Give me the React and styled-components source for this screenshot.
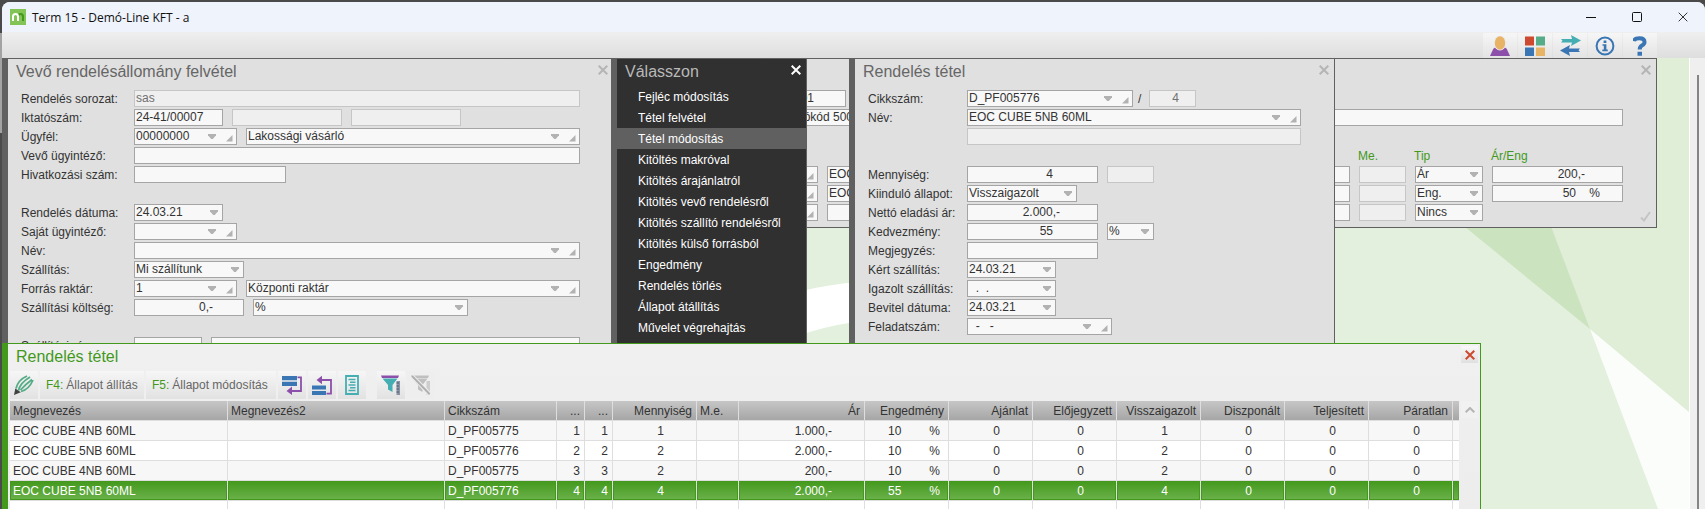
import React, { useId } from 'react';
import styled, { createGlobalStyle, css } from 'styled-components';

const GlobalStyle = createGlobalStyle`
  * {
    box-sizing: border-box;
  }

  body {
    margin: 0;
    background: #4a4a4a;
    font-family: 'Liberation Sans', Arial, sans-serif;
    font-size: 12px;
    color: #333;
    overflow: hidden;
  }

  button, input, select {
    font: inherit;
    color: inherit;
    margin: 0;
    padding: 0;
    border: 0;
    border-radius: 0;
    background: none;
    outline: none;
  }
`;

/* ---------- application frame ---------- */

const Screen = styled.div`
  height: 100vh;
  padding: 2px 0 0 2px;
  background: linear-gradient(#4a4a4a 33px, #a3a3a3 33px, #a3a3a3 133px, #4a4a4a 133px);
`;

const AppWindow = styled.div`
  height: 100%;
  display: flex;
  flex-direction: column;
  border-radius: 8px 8px 0 0;
  overflow: hidden;
  background: #efefef;
`;

const TitleBar = styled.header`
  height: 30px;
  flex: none;
  display: flex;
  align-items: center;
  gap: 6px;
  padding-left: 8px;
  background: #eff3fb;
`;

const AppTitle = styled.h1`
  flex: 1;
  margin: 0;
  font: 400 12px 'Open Sans', 'Noto Sans', sans-serif;
  color: #111;
`;

const CaptionButtons = styled.div`
  display: flex;
`;

const CaptionButton = styled.button`
  width: 46px;
  height: 30px;
  display: flex;
  align-items: center;
  justify-content: center;
  padding-left: 2px;
`;

const MainToolbar = styled.nav`
  height: 26px;
  flex: none;
  display: flex;
  justify-content: flex-end;
  gap: 1px;
  padding: 1px 48px 0 0;
  background: linear-gradient(#efefef, #dedede);
`;

const MainButton = styled.button`
  width: 34px;
  height: 25px;
  display: flex;
  align-items: center;
  justify-content: center;
  background: linear-gradient(#f6f6f6, #e3e3e3);
`;

const Workspace = styled.main`
  flex: 1;
  min-height: 0;
  display: flex;
`;

const Desktop = styled.div`
  position: relative;
  flex: 1;
  overflow: hidden;
  background: #e4f0de;
`;

const Backdrop = styled.svg`
  position: absolute;
  top: 0;
  right: 0;
`;

const ScrollTrack = styled.div`
  width: 16px;
  padding: 17px 6px 0 7px;
  border-left: 1px solid #fff;
  background: #efefef;
`;

const ScrollThumb = styled.div`
  width: 2px;
  height: 100%;
  background: #858585;
`;

/* ---------- windows on the desktop ---------- */

const tones = {
  form: css`
    background: #e0e0e0;
    border-color: #606060;
    --title: #666;
  `,
  menu: css`
    background: #303030;
    border-color: #606060;
    --title: #b9b9b9;
  `,
  active: css`
    background: linear-gradient(#f0f0f0, #e8e8e8);
    border-color: #43991c;
    --title: #43991c;
  `,
};

const Panel = styled.section`
  position: absolute;
  left: ${(p) => p.$x}px;
  top: ${(p) => p.$y}px;
  width: ${(p) => p.$w}px;
  height: ${(p) => p.$h}px;
  overflow: hidden;
  border-style: solid;
  border-width: 1px 1px ${(p) => (p.$closed ? 1 : 0)}px 6px;
  ${(p) => tones[p.$tone]}
`;

const PanelHeader = styled.header`
  height: 27px;
  display: flex;
  justify-content: space-between;
  padding: 2px 2px 0 8px;
`;

const PanelTitle = styled.h2`
  margin: 0;
  font-size: 16px;
  font-weight: 400;
  line-height: 22px;
  color: var(--title);
`;

const CloseButton = styled.button`
  width: 17px;
  height: 17px;
  display: flex;
  align-items: center;
  justify-content: center;
  color: ${(p) => p.$color};
  background: ${(p) => (p.$raised ? 'linear-gradient(#f8f8f8, #e0e0e0)' : 'none')};
`;

const FormBody = styled.form`
  display: flex;
  flex-direction: column;
  gap: 2px;
  padding: 4px 0 0 13px;
`;

const FormRow = styled.div`
  height: 17px;
  flex: none;
  display: flex;
  align-items: center;
`;

const Fields = styled.div`
  display: flex;
  align-items: center;
  gap: 9px;
`;

const Label = styled.label`
  width: ${(p) => p.$w}px;
  flex: none;
  white-space: nowrap;
`;

const Slash = styled.span`
  width: 16px;
  margin: 0 -9px;
  padding-left: 5px;
`;

const Box = styled.div`
  display: grid;
  width: ${(p) => p.$w}px;
  height: 17px;
  flex: none;
  border: 1px solid ${(p) => (p.$off ? '#c6c6c6' : '#a5a5a5')};
  background: ${(p) => (p.$off ? '#efefef' : '#f8f8f8')};
  color: ${(p) => (p.$off ? '#707070' : '#333')};
`;

const control = css`
  grid-area: 1 / 1;
  width: 100%;
  min-width: 0;
  height: 15px;
  line-height: 15px;
`;

const TextInput = styled.input`
  ${control}
  padding-left: 1px;
  padding-right: ${(p) => p.$pad || 0}px;
  text-align: ${(p) => (p.$pad ? 'right' : 'left')};
`;

const Select = styled.select`
  ${control}
  appearance: none;
  padding-left: 1px;
`;

const Marks = styled.span`
  grid-area: 1 / 1;
  justify-self: end;
  display: flex;
  align-items: center;
  gap: 10px;
  padding-right: ${(p) => (p.$lookup ? 3 : 4)}px;
  pointer-events: none;
`;

const Head = styled.span`
  width: ${(p) => p.$w}px;
  color: #43991c;
`;

const Confirm = styled.button`
  position: absolute;
  right: 5px;
  bottom: 5px;
  display: flex;
`;

/* ---------- menu ---------- */

const MenuList = styled.ul`
  margin: 0;
  padding: 0;
  list-style: none;
`;

const MenuItem = styled.button`
  width: 100%;
  height: 21px;
  display: block;
  padding-left: 21px;
  text-align: left;
  color: #fff;
  background: ${(p) => (p.$selected ? '#606060' : 'none')};
`;

/* ---------- item list ---------- */

const ListToolbar = styled.div`
  display: flex;
  gap: 2px;
  padding: 0 0 2px 2px;
`;

const ToolButton = styled.button`
  width: 28px;
  height: 28px;
  display: flex;
  align-items: center;
  justify-content: center;
  margin-left: ${(p) => (p.$apart ? 9 : 0)}px;
  background: ${(p) => (p.disabled ? '#eee' : 'linear-gradient(#f6f6f6, #e2e2e2)')};
`;

const TextToolButton = styled(ToolButton)`
  width: ${(p) => p.$w}px;
  justify-content: flex-start;
  gap: 3px;
  padding-left: 6px;
  color: #666;
  white-space: nowrap;

  b {
    font-weight: 400;
    color: #43991c;
  }
`;

const ListArea = styled.div`
  display: flex;
  gap: 2px;
  padding: 0 2px;
`;

const ItemTable = styled.table`
  flex: 1;
  table-layout: fixed;
  border-collapse: separate;
  border-spacing: 0;
  line-height: 16px;
`;

const cell = css`
  height: 20px;
  padding: 0 ${(p) => p.$pad || 4}px 0 3px;
  border-right: 1px solid #dedede;
  border-bottom: 1px solid #dedede;
  font-weight: 400;
  text-align: ${(p) => (p.$right ? 'right' : 'left')};
  white-space: nowrap;
  overflow: hidden;

  &:last-child {
    padding: 0;
    border-right: 0;
  }
`;

const Th = styled.th`
  ${cell}
  background: linear-gradient(#c6c6c6, #a6a6a6);
`;

const Td = styled.td`
  ${cell}
`;

const Tr = styled.tr`
  background: #fff;

  &:nth-child(odd) {
    background: #f7f7f7;
  }

  &:last-child {
    background: #fff;
  }

  &[aria-selected='true'] {
    color: #fff;
  }

  &[aria-selected='true'] td {
    background: linear-gradient(#43991c, #6bb14b);
    box-shadow: inset 0 0 0 1px #43991c;
  }
`;

const Pair = styled.span`
  display: flex;
  justify-content: flex-end;
  gap: 28px;
`;

const ScrollUp = styled.button`
  width: 17px;
  height: 17px;
  display: flex;
  align-items: center;
  justify-content: center;
  background: #f1f1f1;
`;

/* ---------- small drawings ---------- */

const Cross = ({ width = 2 }) => (
  <svg width="10" height="10" viewBox="0 0 10 10" stroke="currentColor" strokeWidth={width} fill="none">
    <path d="M0.7 0.7L9.3 9.3M9.3 0.7L0.7 9.3" />
  </svg>
);

const DownMark = () => (
  <svg width="8" height="5" viewBox="0 0 8 5" fill="#b2b2b2">
    <path d="M0 0H8V1.3L4.8 5H3.2L0 1.3Z" />
  </svg>
);

const CornerMark = () => (
  <svg width="7" height="11" viewBox="0 0 7 11" fill="#b2b2b2">
    <path d="M6.5 4V10.5H0Z" />
  </svg>
);

const AppLogo = () => (
  <svg width="16" height="16" viewBox="0 0 16 16" fill="none" strokeWidth="2">
    <rect width="16" height="16" fill="#82c455" />
    <path d="M8 12V7.5Q8 5 10.6 5Q13 5 13 7.5V12" stroke="#43991c" />
    <path d="M3 12V7.5Q3 5 5.6 5Q8 5 8 7.5V12" stroke="#fff" />
  </svg>
);

const UserIcon = () => (
  <svg width="20" height="20" viewBox="0 0 20 20">
    <path d="M0 20L3.2 13Q4 11.5 5.5 11.5H14.5Q16 11.5 16.8 13L20 20Z" fill="#8c50ab" />
    <ellipse cx="10" cy="7" rx="6.2" ry="7.6" fill="#ebebeb" />
    <ellipse cx="10" cy="7" rx="5.2" ry="6.7" fill="#e9b365" />
  </svg>
);

const TilesIcon = () => (
  <svg width="20" height="20" viewBox="0 0 20 20">
    <path d="M0 0.5H9V9.5H0Z" fill="#cd4a30" />
    <path d="M11 0.5H20V9.5H11Z" fill="#56ac88" />
    <path d="M0 11.5H9V20H0Z" fill="#3a76b4" />
    <path d="M11 11.5H20V20H11Z" fill="#e9b365" />
  </svg>
);

const SwapIcon = () => (
  <svg width="21" height="21" viewBox="0 0 21 21">
    <path d="M1 4H12L11 0L21 5.5L11 11L12 7.5H1L2.5 5.8Z" fill="#45aeb2" />
    <path d="M20 13.5H9L10 10L0 15.5L10 21L9 17H20L18.5 15.2Z" fill="#3a76b4" />
  </svg>
);

const InfoIcon = () => (
  <svg width="20" height="20" viewBox="0 0 20 20">
    <circle cx="10" cy="10" r="8.4" fill="none" stroke="#3a76b4" strokeWidth="2" />
    <path d="M8.6 4.5H11.4V7H8.6ZM7.5 8.2H11.4V13.6H12.8V15.2H7.3V13.6H8.8V9.8H7.5Z" fill="#3a76b4" />
  </svg>
);

const HelpIcon = () => (
  <svg width="14" height="20" viewBox="0 0 14 20" fill="none" stroke="#3a76b4">
    <path d="M1 5.2Q1.5 2.2 6.5 2.2Q11.5 2.2 11.5 6Q11.5 8 9.3 9.3Q6.7 10.6 6.7 13.5" strokeWidth="4" />
    <path d="M4.5 17.7H9" strokeWidth="4" />
  </svg>
);

const PencilIcon = () => (
  <svg width="20" height="20" viewBox="0 0 20 20" fill="none">
    <path d="M2 13.5Q4 5 13 1M4.5 15.5Q6 8 16 2M7 16.5Q15 14.5 19 5M6.5 15Q12 9 18 4.5" stroke="#56ac88" strokeWidth="1.8" />
    <path d="M0 20L1.3 13.5L6.8 17.2Z" fill="#404040" />
  </svg>
);

const InsertBelowIcon = () => (
  <svg width="20" height="20" viewBox="0 0 20 20">
    <path d="M0 1H15V5.3H0ZM0 6.7H15V11H0Z" fill="#3a76b4" />
    <path d="M15.5 2.4H19V16H7" fill="none" stroke="#8c50ab" strokeWidth="1.8" />
    <path d="M10 11.5V20L4.5 16Z" fill="#8c50ab" />
  </svg>
);

const InsertAboveIcon = () => (
  <svg width="20" height="20" viewBox="0 0 20 20">
    <path d="M0 10.5H14V14.6H0ZM0 16H14V20H0Z" fill="#3a76b4" />
    <path d="M14.5 18.6H19V5H8" fill="none" stroke="#8c50ab" strokeWidth="1.8" />
    <path d="M10 0.8V9.2L4.5 5Z" fill="#8c50ab" />
  </svg>
);

const PageIcon = () => (
  <svg width="14" height="20" viewBox="0 0 14 20" fill="none" stroke="#45aeb2">
    <path d="M1 1H13V19H1Z" strokeWidth="1.8" />
    <path d="M3.5 4.5H10.5M3.5 10H10.5M3.5 15.5H10.5" strokeWidth="1.5" />
    <path d="M5 7.3H10.5M5 12.8H10.5" strokeWidth="1.5" />
  </svg>
);

const FilterIcon = () => (
  <svg width="20" height="20" viewBox="0 0 20 20">
    <path d="M0 0.5H18L17 3H1Z" fill="#8c50ab" />
    <path d="M1.5 3.5H16.5L11.5 10V17L7 14.5V10Z" fill="#45aeb2" />
    <path d="M15.5 6H19V20H15.5Z" fill="#8a93a3" />
    <path d="M15.5 8H18M15.5 11H18M15.5 14H18M15.5 17H18" stroke="#4c5a70" />
  </svg>
);

const FilterOffIcon = () => (
  <svg width="20" height="20" viewBox="0 0 20 20">
    <path d="M0 0.5H18L17 3H1ZM1.5 3.5H16.5L11.5 10V17L7 14.5V10Z" fill="#bfbfbf" />
    <path d="M15.5 6H19V20H15.5Z" fill="#cdcdcd" />
    <path d="M1 1L18.5 19" stroke="#eee" strokeWidth="4" />
    <path d="M1 1L18.5 19" stroke="#b0b0b0" strokeWidth="2" />
  </svg>
);

/* ---------- building blocks ---------- */

const Field = ({ id, name, w, value = '', off, pad, drop, lookup, select }) => (
  <Box $w={w} $off={off}>
    {select ? (
      <Select id={id} aria-label={id ? undefined : name} defaultValue={value}>
        <option>{value}</option>
      </Select>
    ) : (
      <TextInput
        id={id}
        aria-label={id ? undefined : name}
        defaultValue={value}
        disabled={off}
        $pad={pad}
      />
    )}
    {(drop || lookup || select) && (
      <Marks $lookup={lookup}>
        <DownMark />
        {lookup && <CornerMark />}
      </Marks>
    )}
  </Box>
);

const Row = ({ label, labelWidth, fields = [] }) => {
  const id = useId();
  return (
    <FormRow>
      <Label $w={labelWidth} htmlFor={label ? id : undefined}>{label}</Label>
      <Fields>
        {fields.map((f, i) =>
          f === '/' ? (
            <Slash key={i}>/</Slash>
          ) : (
            <Field
              key={i}
              id={label && i === 0 ? id : undefined}
              name={`${label || 'Név'} ${i + 1}`}
              {...f}
            />
          )
        )}
      </Fields>
    </FormRow>
  );
};

const WindowHeader = ({ title, closeColor = '#b5b5b5', raised }) => (
  <PanelHeader>
    <PanelTitle>{title}</PanelTitle>
    <CloseButton type="button" aria-label="Bezárás" $color={closeColor} $raised={raised}>
      <Cross />
    </CloseButton>
  </PanelHeader>
);

/* ---------- data ---------- */

const orderRows = [
  { label: 'Rendelés sorozat:', fields: [{ w: 446, value: 'sas', off: true }] },
  { label: 'Iktatószám:', fields: [{ w: 89, value: '24-41/00007' }, { w: 110, off: true }, { w: 110, off: true }] },
  { label: 'Ügyfél:', fields: [{ w: 103, value: '00000000', lookup: true }, { w: 334, value: 'Lakossági vásárló', lookup: true }] },
  { label: 'Vevő ügyintéző:', fields: [{ w: 446 }] },
  { label: 'Hivatkozási szám:', fields: [{ w: 152 }] },
  {},
  { label: 'Rendelés dátuma:', fields: [{ w: 89, value: '24.03.21', drop: true }] },
  { label: 'Saját ügyintéző:', fields: [{ w: 103, lookup: true }] },
  { label: 'Név:', fields: [{ w: 446, lookup: true }] },
  { label: 'Szállítás:', fields: [{ w: 110, value: 'Mi szállítunk', select: true }] },
  { label: 'Forrás raktár:', fields: [{ w: 103, value: '1', lookup: true }, { w: 334, value: 'Központi raktár', lookup: true }] },
  { label: 'Szállítási költség:', fields: [{ w: 110, value: '0,-', pad: 30 }, { w: 215, value: '%', select: true }] },
  {},
  { label: 'Szállítási cím:', fields: [{ w: 68 }, { w: 369 }] },
];

const itemRows = [
  { label: 'Cikkszám:', fields: [{ w: 166, value: 'D_PF005776', lookup: true }, '/', { w: 47, value: '4', off: true, pad: 16 }] },
  { label: 'Név:', fields: [{ w: 334, value: 'EOC CUBE 5NB 60ML', lookup: true }] },
  { fields: [{ w: 334, off: true }] },
  {},
  { label: 'Mennyiség:', fields: [{ w: 131, value: '4', pad: 44 }, { w: 47, off: true }] },
  { label: 'Kiinduló állapot:', fields: [{ w: 110, value: 'Visszaigazolt', select: true }] },
  { label: 'Nettó eladási ár:', fields: [{ w: 131, value: '2.000,-', pad: 37 }] },
  { label: 'Kedvezmény:', fields: [{ w: 131, value: '55', pad: 44 }, { w: 47, value: '%', select: true }] },
  { label: 'Megjegyzés:', fields: [{ w: 131 }] },
  { label: 'Kért szállítás:', fields: [{ w: 89, value: '24.03.21', drop: true }] },
  { label: 'Igazolt szállítás:', fields: [{ w: 89, value: '  .  .', drop: true }] },
  { label: 'Bevitel dátuma:', fields: [{ w: 89, value: '24.03.21', drop: true }] },
  { label: 'Feladatszám:', fields: [{ w: 145, value: '  -   -', lookup: true }] },
];

const priceRows = [
  [{ w: 39, lookup: true }, { w: 523, value: 'EOC CUBE 4NB 60ML' }, { w: 47, off: true }, { w: 68, value: 'Ár', select: true }, { w: 131, value: '200,-', pad: 37 }],
  [{ w: 39, lookup: true }, { w: 523, value: 'EOC CUBE 4NB 60ML' }, { w: 47, off: true }, { w: 68, value: 'Eng.', select: true }, { w: 131, value: '50    %', pad: 22 }],
  [{ w: 39, lookup: true }, { w: 523 }, { w: 47, off: true }, { w: 68, value: 'Nincs', select: true }],
];

const menuItems = [
  'Fejléc módosítás',
  'Tétel felvétel',
  'Tétel módosítás',
  'Kitöltés makróval',
  'Kitöltés árajánlatról',
  'Kitöltés vevő rendelésről',
  'Kitöltés szállító rendelésről',
  'Kitöltés külső forrásból',
  'Engedmény',
  'Rendelés törlés',
  'Állapot átállítás',
  'Művelet végrehajtás',
];

const columns = [
  { title: 'Megnevezés', w: 218 },
  { title: 'Megnevezés2', w: 217 },
  { title: 'Cikkszám', w: 112 },
  { title: '...', w: 28, right: true },
  { title: '...', w: 28, right: true },
  { title: 'Mennyiség', w: 84, right: true, pad: 32 },
  { title: 'M.e.', w: 42 },
  { title: 'Ár', w: 126, right: true, pad: 32 },
  { title: 'Engedmény', w: 84, right: true, pad: 8 },
  { title: 'Ajánlat', w: 84, right: true, pad: 32 },
  { title: 'Előjegyzett', w: 84, right: true, pad: 32 },
  { title: 'Visszaigazolt', w: 84, right: true, pad: 32 },
  { title: 'Diszponált', w: 84, right: true, pad: 32 },
  { title: 'Teljesített', w: 84, right: true, pad: 32 },
  { title: 'Páratlan', w: 84, right: true, pad: 32 },
  { title: '', w: 6 },
];

const items = [
  ['EOC CUBE 4NB 60ML', '', 'D_PF005775', 1, 1, 1, '', '1.000,-', ['10', '%'], 0, 0, 1, 0, 0, 0, ''],
  ['EOC CUBE 5NB 60ML', '', 'D_PF005776', 2, 2, 2, '', '2.000,-', ['10', '%'], 0, 0, 2, 0, 0, 0, ''],
  ['EOC CUBE 4NB 60ML', '', 'D_PF005775', 3, 3, 2, '', '200,-', ['10', '%'], 0, 0, 2, 0, 0, 0, ''],
  ['EOC CUBE 5NB 60ML', '', 'D_PF005776', 4, 4, 4, '', '2.000,-', ['55', '%'], 0, 0, 4, 0, 0, 0, ''],
  Array(16).fill(''),
];

const mainTools = [
  ['Felhasználó', UserIcon],
  ['Modulok', TilesIcon],
  ['Váltás', SwapIcon],
  ['Információ', InfoIcon],
  ['Súgó', HelpIcon],
];

/* ---------- windows ---------- */

const OrderWindow = () => (
  <Panel $tone="form" $x={0} $y={0} $w={612} $h={286}>
    <WindowHeader title="Vevő rendelésállomány felvétel" />
    <FormBody>
      {orderRows.map((row, i) => <Row key={i} labelWidth={113} {...row} />)}
    </FormBody>
  </Panel>
);

const PriceWindow = () => (
  <Panel $tone="form" $closed $x={758} $y={0} $w={897} $h={170}>
    <WindowHeader title="" />
    <FormBody>
      <FormRow><Field name="Partner kód" w={67} value="0001" pad={31} /></FormRow>
      <FormRow><Field name="Partner név" w={844} value="Akciókód 500" /></FormRow>
      <FormRow />
      <FormRow>
        <Fields>
          <Head $w={570} />
          <Head $w={47}>Me.</Head>
          <Head $w={68}>Tip</Head>
          <Head $w={131}>Ár/Eng</Head>
        </Fields>
      </FormRow>
      {priceRows.map((fields, i) => (
        <FormRow key={i}>
          <Fields>
            {fields.map((f, j) => <Field key={j} name={`Tétel ${i + 1}/${j + 1}`} {...f} />)}
          </Fields>
        </FormRow>
      ))}
    </FormBody>
    <Confirm type="button" aria-label="Rendben">
      <svg width="11" height="11" viewBox="0 0 11 11" fill="none" stroke="#c4c4c4" strokeWidth="2">
        <path d="M1 6.5L4 9.5L10 1" />
      </svg>
    </Confirm>
  </Panel>
);

const MenuWindow = () => (
  <Panel $tone="menu" $x={609} $y={0} $w={196} $h={286}>
    <WindowHeader title="Válasszon" closeColor="#fff" />
    <MenuList>
      {menuItems.map((text) => (
        <li key={text}>
          <MenuItem type="button" $selected={text === 'Tétel módosítás'}>{text}</MenuItem>
        </li>
      ))}
    </MenuList>
  </Panel>
);

const ItemWindow = () => (
  <Panel $tone="form" $x={847} $y={0} $w={486} $h={286}>
    <WindowHeader title="Rendelés tétel" />
    <FormBody>
      {itemRows.map((row, i) => <Row key={i} labelWidth={99} {...row} />)}
    </FormBody>
  </Panel>
);

const ListWindow = () => (
  <Panel $tone="active" $x={0} $y={285} $w={1479} $h={400}>
    <WindowHeader title="Rendelés tétel" closeColor="#cd4a30" raised />
    <ListToolbar>
      <ToolButton type="button" aria-label="Szerkesztés"><PencilIcon /></ToolButton>
      <TextToolButton type="button" $w={104}><b>F4:</b>Állapot állítás</TextToolButton>
      <TextToolButton type="button" $w={130}><b>F5:</b>Állapot módosítás</TextToolButton>
      <ToolButton type="button" aria-label="Beszúrás alá"><InsertBelowIcon /></ToolButton>
      <ToolButton type="button" aria-label="Beszúrás fölé"><InsertAboveIcon /></ToolButton>
      <ToolButton type="button" aria-label="Részletek"><PageIcon /></ToolButton>
      <ToolButton type="button" aria-label="Szűrés" $apart><FilterIcon /></ToolButton>
      <ToolButton type="button" aria-label="Szűrés törlése" disabled><FilterOffIcon /></ToolButton>
    </ListToolbar>
    <ListArea>
      <ItemTable>
        <colgroup>
          {columns.map((c, i) => <col key={i} width={c.w} />)}
        </colgroup>
        <thead>
          <tr>
            {columns.map((c, i) => <Th key={i} $right={c.right}>{c.title}</Th>)}
          </tr>
        </thead>
        <tbody>
          {items.map((item, r) => (
            <Tr key={r} aria-selected={r === 3}>
              {item.map((v, i) => (
                <Td key={i} $right={columns[i].right} $pad={columns[i].pad}>
                  {Array.isArray(v) ? <Pair>{v.map((part) => <span key={part}>{part}</span>)}</Pair> : v}
                </Td>
              ))}
            </Tr>
          ))}
        </tbody>
      </ItemTable>
      <ScrollUp type="button" aria-label="Görgetés fel">
        <svg width="10" height="6" viewBox="0 0 10 6" fill="none" stroke="#b5b5b5" strokeWidth="2">
          <path d="M0.7 5.3L5 1L9.3 5.3" />
        </svg>
      </ScrollUp>
    </ListArea>
  </Panel>
);

const App = () => (
  <Screen>
    <GlobalStyle />
    <AppWindow>
      <TitleBar>
        <AppLogo />
        <AppTitle>Term 15 - Demó-Line KFT - a</AppTitle>
        <CaptionButtons>
          <CaptionButton type="button" aria-label="Kis méret">
            <svg width="10" height="10" stroke="#111"><path d="M0 5.5H10" /></svg>
          </CaptionButton>
          <CaptionButton type="button" aria-label="Teljes méret">
            <svg width="10" height="10" stroke="#111" fill="none"><rect x="0.5" y="0.5" width="9" height="9" rx="1" /></svg>
          </CaptionButton>
          <CaptionButton type="button" aria-label="Bezárás"><Cross width={1} /></CaptionButton>
        </CaptionButtons>
      </TitleBar>
      <MainToolbar>
        {mainTools.map(([name, Icon]) => (
          <MainButton key={name} type="button" aria-label={name}><Icon /></MainButton>
        ))}
      </MainToolbar>
      <Workspace>
        <Desktop>
          <Backdrop width="1687" height="451" viewBox="2 58 1687 451">
            <path d="M1258 58H1689V412L1590 329Z" fill="#cbe4bf" />
            <path d="M1487 58H1689V412L1590 329Z" fill="#e0edd7" />
            <path d="M1590 329L1689 412V509H1658Z" fill="#fbfdfa" />
            <path d="M770 301Q810 285 870 281V321Q830 322 770 346Z" fill="#fff" />
          </Backdrop>
          <OrderWindow />
          <PriceWindow />
          <MenuWindow />
          <ItemWindow />
          <ListWindow />
        </Desktop>
        <ScrollTrack><ScrollThumb /></ScrollTrack>
      </Workspace>
    </AppWindow>
  </Screen>
);

export default App;
